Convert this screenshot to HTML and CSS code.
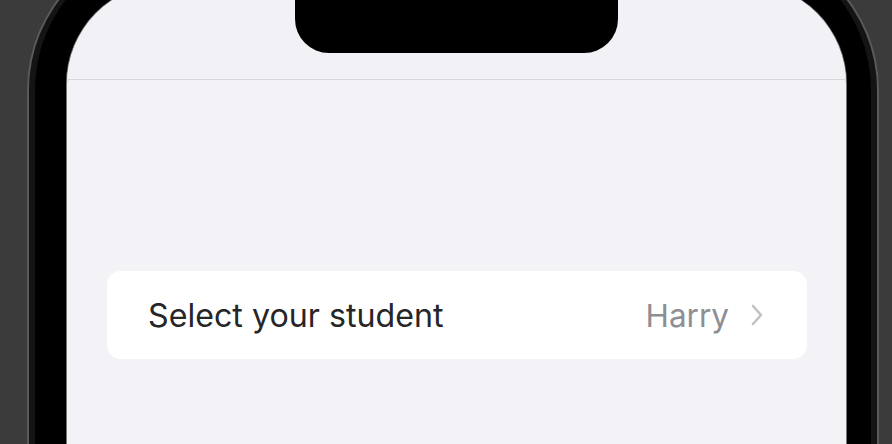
FILE: index.html
```html
<!DOCTYPE html>
<html lang="en">
<head>
<meta charset="utf-8">
<title>Select student</title>
<link rel="stylesheet" href="styles.css">
</head>
<body>
<div class="phone">
  <div class="screen">
    <header class="nav">
      <div class="island"></div>
    </header>
    <main class="content">
      <div class="card">
        <span class="label">Select your student</span>
        <span class="value">Harry
          <svg class="chev" width="12" height="22" viewBox="0 0 12 22" aria-hidden="true">
            <path d="M2 2 L10 11 L2 20" fill="none" stroke="#c2c2c6" stroke-width="2.6" stroke-linecap="round" stroke-linejoin="round"/>
          </svg>
        </span>
      </div>
    </main>
  </div>
</div>
</body>
</html>
```
FILE: styles.css
```css
html, body {
  margin: 0;
  padding: 0;
}
body {
  background: #3b3b3b;
  height: 444px;
  overflow: hidden;
  font-family: "Inter", "Roboto", "Liberation Sans", sans-serif;
}
.phone {
  margin-top: -60px;
  margin-left: 27px;
  width: 852px;
  height: 504px;
  box-sizing: border-box;
  background: #000;
  border: 2px solid #5a5a5a;
  border-bottom: 0;
  border-radius: 150px 150px 0 0;
  box-shadow: inset 6px 0 0 #141414, inset -6px 0 0 #141414;
  padding: 42px 31px 0 38px;
}
.screen {
  background: #f2f2f7;
  height: 100%;
  border-radius: 100px 100px 0 0;
  overflow: hidden;
  box-shadow: 0 0 0 1px #777;
}
.nav {
  height: 95px;
  border-bottom: 1px solid #d8d8dc;
  display: flex;
  justify-content: center;
  background: #f2f2f6;
}
.island {
  width: 323px;
  height: 69px;
  background: #000;
  border-radius: 0 0 34px 34px;
}
.content {
  padding: 191px 39px 0 40px;
}
.card {
  background: #fff;
  height: 88px;
  border-radius: 14px;
  display: flex;
  align-items: center;
  justify-content: space-between;
  padding: 0 44px 0 41px;
}
.label {
  font-size: 32.2px;
  color: #262628;
}
.value {
  display: flex;
  align-items: center;
  gap: 22px;
  font-size: 31.5px;
  color: #8e8e93;
}
.chev {
  display: block;
}
```
